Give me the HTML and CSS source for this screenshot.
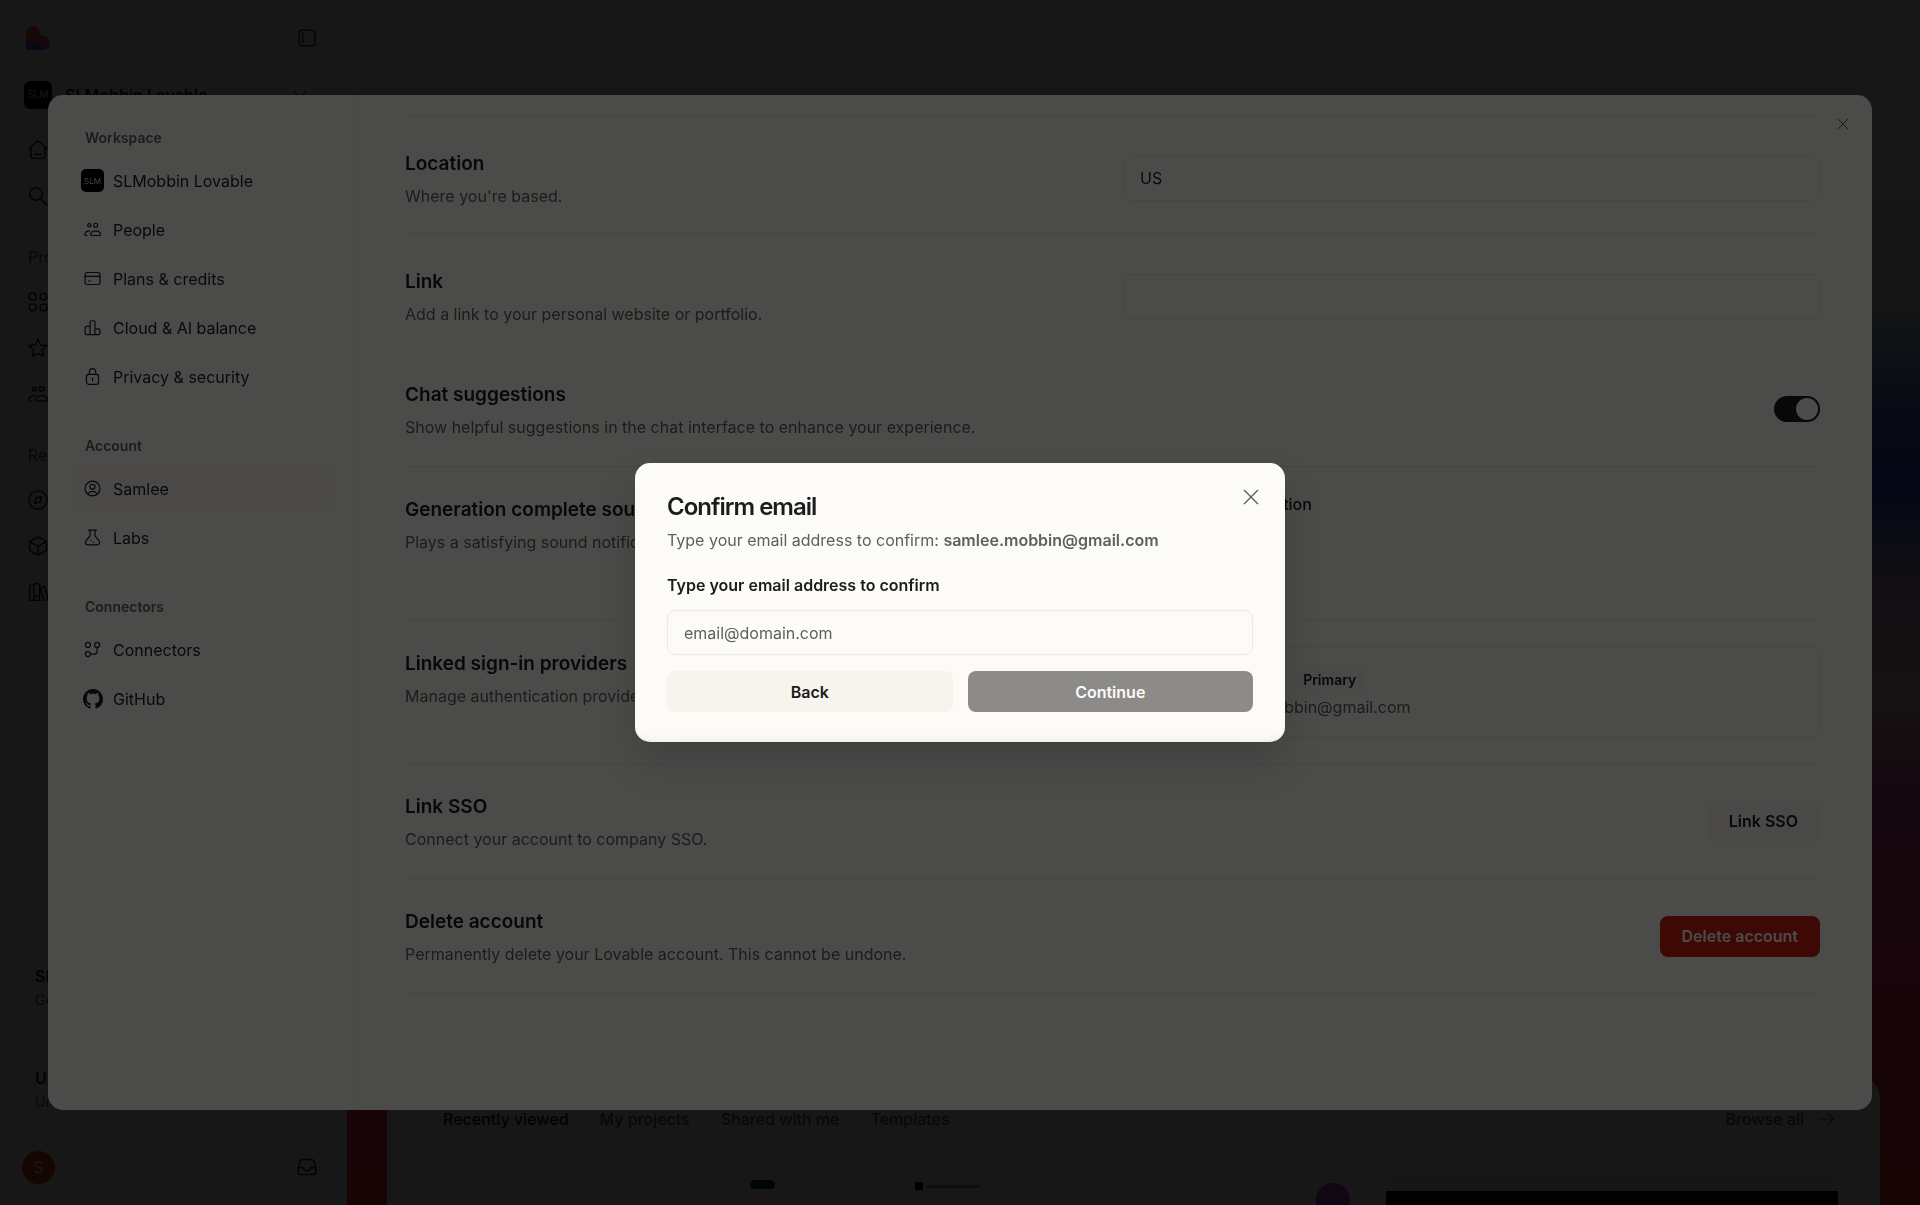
FILE: index.html
```html
<!DOCTYPE html>
<html lang="en">
<head>
    <meta charset="UTF-8">
    <meta name="viewport" content="width=device-width, initial-scale=1.0">
    <title>Lovable - Settings</title>
    <link rel="stylesheet" href="styles.css">
</head>
<body>
    <svg width="0" height="0" class="sprite" aria-hidden="true">
        <symbol id="i-people" viewBox="0 0 24 24">
            <circle cx="7.500" cy="6" r="2.300"/>
            <circle cx="16.500" cy="6" r="2.800"/>
            <path d="M11 20.500c-1.300 0-2-.9-1.700-2C10 15.800 13 14 16.500 14s6.300 1.800 6.900 4.500c.3 1.100-.5 2-1.700 2z"/>
            <path d="M8 14c-3.500 0-6 1.600-6.800 4.200-.4 1.300.3 2.300 1.600 2.300H4.500"/>
        </symbol>
        <symbol id="i-card" viewBox="0 0 24 24">
            <rect x="1.500" y="3.500" width="21" height="17" rx="3"/>
            <path d="M1.500 9h21M6.500 15.500h3"/>
        </symbol>
        <symbol id="i-chart" viewBox="0 0 24 24">
            <path d="M8.500 22V4.500a2 2 0 0 1 2-2h3a2 2 0 0 1 2 2V22M8.500 10.500h-5a2 2 0 0 0-2 2V20a2 2 0 0 0 2 2h17a2 2 0 0 0 2-2v-4a2 2 0 0 0-2-2h-5"/>
        </symbol>
        <symbol id="i-lock" viewBox="0 0 24 24">
            <rect x="3.500" y="9" width="17" height="14" rx="3"/>
            <path d="M7.500 9V5.500a4.500 4.500 0 0 1 9 0V9M12 14v4"/>
        </symbol>
        <symbol id="i-user" viewBox="0 0 24 24">
            <circle cx="12" cy="12" r="10.500"/>
            <circle cx="12" cy="9.500" r="3.500"/>
            <path d="M5.500 19.500c1.300-2.200 3.700-3.500 6.500-3.500s5.200 1.300 6.500 3.500"/>
        </symbol>
        <symbol id="i-flask" viewBox="0 0 24 24">
            <path d="M6.500 1.500h11M8.500 1.500v8.200L3 16.500C.8 19.300 2.200 22.500 5.500 22.500h13c3.300 0 4.700-3.200 2.500-6l-5.500-6.800V1.500"/>
            <path d="M9.500 15.500v.5M13.500 18.500v.5"/>
        </symbol>
        <symbol id="i-connect" viewBox="0 0 24 24">
            <circle cx="5.500" cy="5.500" r="3.500"/>
            <circle cx="18.500" cy="5.500" r="3.500"/>
            <circle cx="5.500" cy="18.500" r="3.500"/>
            <path d="M18.500 9v5.500a4 4 0 0 1-4 4H9"/>
        </symbol>
        <symbol id="i-x" viewBox="0 0 24 24">
            <path d="M2 2l20 20M22 2L2 22"/>
        </symbol>
        <symbol id="i-panel" viewBox="0 0 24 24">
            <rect x="1.500" y="1.500" width="21" height="21" rx="3"/>
            <path d="M6.500 6v12"/>
        </symbol>
        <symbol id="i-home" viewBox="0 0 24 24">
            <path d="M1 10.500l9.500-8.300a2.300 2.300 0 0 1 3 0L23 10.500M3.500 8.500V19a3 3 0 0 0 3 3h11a3 3 0 0 0 3-3V8.500M8 17h8"/>
        </symbol>
        <symbol id="i-search" viewBox="0 0 24 24">
            <circle cx="9.500" cy="9.500" r="7.500"/>
            <path d="M15 15l7.500 7.500"/>
        </symbol>
        <symbol id="i-grid" viewBox="0 0 24 24">
            <rect x="1.500" y="1.500" width="8" height="8" rx="3"/>
            <rect x="14.500" y="1.500" width="8" height="8" rx="4"/>
            <rect x="1.500" y="14.500" width="8" height="8" rx="3"/>
            <rect x="14.500" y="14.500" width="8" height="8" rx="3"/>
        </symbol>
        <symbol id="i-star" viewBox="0 0 24 24">
            <path d="M12 1.500l3.200 6.900 7.500.9-5.500 5.200 1.400 7.400L12 18.300l-6.600 3.600 1.400-7.400L1.300 9.300l7.500-.9z"/>
        </symbol>
        <symbol id="i-compass" viewBox="0 0 24 24">
            <circle cx="12" cy="12" r="11"/>
            <path d="M9.800 9.300L16 8l-1.300 6.500L8 16z"/>
        </symbol>
        <symbol id="i-box" viewBox="0 0 24 24">
            <path d="M12 1l10 5.500v11L12 23 2 17.500v-11zM2.500 7L12 12.500 21.500 7M12 12.500V23"/>
        </symbol>
        <symbol id="i-books" viewBox="0 0 24 24">
            <path d="M2 4h5v18H2zM7 4.500C7 3 8 2 9.500 2h1.800C12.800 2 14 3 14 4.500V22H7M7 17h7M15 7l5-1.500L24 21l-5 1z"/>
        </symbol>
        <symbol id="i-chevron" viewBox="0 0 24 24">
            <path d="M3 7l9 9 9-9"/>
        </symbol>
        <symbol id="i-inbox" viewBox="0 0 24 24">
            <path d="M1.500 12.500L4 5.500A3 3 0 0 1 7 3h10a3 3 0 0 1 3 2.500l2.500 7V18a3 3 0 0 1-3 3h-15a3 3 0 0 1-3-3zM1.500 12.500H7c.8 2.500 2.500 4 5 4s4.200-1.500 5-4h5.500"/>
        </symbol>
        <symbol id="i-arrow" viewBox="0 0 24 24">
            <path d="M1 12h22M15 3.500l8 8.500-8 8.500"/>
        </symbol>
    </svg>

    <!-- App behind the settings window -->
    <div class="app">
        <aside class="sidebar">
            <div class="sidebar-top">
                <svg class="logo" viewBox="0 0 24 24" aria-hidden="true">
                    <defs>
                        <linearGradient id="heart" x1="0.500" y1="0" x2="0.300" y2="1">
                            <stop offset="0.250" stop-color="#ff5a1f"/>
                            <stop offset="0.600" stop-color="#f04a8c"/>
                            <stop offset="0.900" stop-color="#5a54ff"/>
                        </linearGradient>
                    </defs>
                    <path fill="url(#heart)" d="M0 7a7 7 0 0 1 14 0v3h3a7 7 0 0 1 0 14H0z"/>
                </svg>
                <button class="icon-btn" aria-label="Collapse sidebar"><svg class="icon"><use href="#i-panel"/></svg></button>
            </div>
            <button class="workspace">
                <span class="workspace-logo">SLM</span>
                <span class="workspace-name">SLMobbin Lovable</span>
                <svg class="icon chevron"><use href="#i-chevron"/></svg>
            </button>
            <nav class="side-nav">
                <a href="#"><svg class="icon"><use href="#i-home"/></svg></a>
                <a href="#"><svg class="icon"><use href="#i-search"/></svg></a>
                <h3>Projects</h3>
                <a href="#"><svg class="icon"><use href="#i-grid"/></svg></a>
                <a href="#"><svg class="icon"><use href="#i-star"/></svg></a>
                <a href="#"><svg class="icon"><use href="#i-people"/></svg></a>
                <h3>Resources</h3>
                <a href="#"><svg class="icon"><use href="#i-compass"/></svg></a>
                <a href="#"><svg class="icon"><use href="#i-box"/></svg></a>
                <a href="#"><svg class="icon"><use href="#i-books"/></svg></a>
            </nav>
            <div class="promos">
                <div class="promo"><strong>Share Lovable</strong><span>Get 10 credits</span></div>
                <div class="promo"><strong>Upgrade</strong><span>Unlock more</span></div>
            </div>
            <div class="sidebar-user">
                <span class="avatar">S</span>
                <button class="icon-btn" aria-label="Inbox"><svg class="icon"><use href="#i-inbox"/></svg></button>
            </div>
        </aside>
        <main class="home">
            <section class="projects">
                <div class="tabs">
                    <a href="#" class="active">Recently viewed</a>
                    <a href="#">My projects</a>
                    <a href="#">Shared with me</a>
                    <a href="#">Templates</a>
                    <a href="#" class="browse">Browse all <svg class="icon"><use href="#i-arrow"/></svg></a>
                </div>
                <div class="thumbs">
                    <div class="thumb thumb-light"><span class="pill"></span></div>
                    <div class="thumb thumb-light"><span class="tag"></span><span class="tag-line"></span><span class="ball"></span></div>
                    <div class="thumb thumb-dark"></div>
                </div>
            </section>
        </main>
    </div>

    <div class="overlay"></div>

    <!-- Settings window -->
    <div class="settings">
        <nav class="settings-nav">
            <section>
                <h3>Workspace</h3>
                <a href="#"><span class="nav-icon nav-logo">SLM</span>SLMobbin Lovable</a>
                <a href="#"><span class="nav-icon"><svg class="icon"><use href="#i-people"/></svg></span>People</a>
                <a href="#"><span class="nav-icon"><svg class="icon"><use href="#i-card"/></svg></span>Plans &amp; credits</a>
                <a href="#"><span class="nav-icon"><svg class="icon"><use href="#i-chart"/></svg></span>Cloud &amp; AI balance</a>
                <a href="#"><span class="nav-icon"><svg class="icon"><use href="#i-lock"/></svg></span>Privacy &amp; security</a>
            </section>
            <section>
                <h3>Account</h3>
                <a href="#" class="active"><span class="nav-icon"><svg class="icon"><use href="#i-user"/></svg></span>Samlee</a>
                <a href="#"><span class="nav-icon"><svg class="icon"><use href="#i-flask"/></svg></span>Labs</a>
            </section>
            <section>
                <h3>Connectors</h3>
                <a href="#"><span class="nav-icon"><svg class="icon"><use href="#i-connect"/></svg></span>Connectors</a>
                <a href="#"><span class="nav-icon"><svg class="github" viewBox="0 0 16 16"><path d="M8 0C3.580 0 0 3.580 0 8c0 3.540 2.290 6.530 5.470 7.590.4.070.55-.17.55-.38 0-.19-.01-.82-.01-1.490-2.010.37-2.530-.49-2.690-.94-.09-.23-.48-.94-.82-1.130-.28-.15-.68-.52-.01-.53.63-.01 1.080.58 1.230.82.72 1.210 1.870.87 2.330.66.07-.52.28-.87.51-1.070-1.780-.2-3.640-.89-3.640-3.950 0-.87.31-1.590.82-2.150-.08-.2-.36-1.020.08-2.120 0 0 .67-.21 2.200.82.64-.18 1.320-.27 2-.27s1.360.09 2 .27c1.530-1.040 2.200-.82 2.200-.82.44 1.100.16 1.920.08 2.120.51.56.82 1.270.82 2.150 0 3.070-1.870 3.750-3.650 3.950.29.25.54.73.54 1.480 0 1.070-.01 1.930-.01 2.200 0 .21.15.46.55.38A8.010 8.010 0 0 0 16 8c0-4.420-3.580-8-8-8z"/></svg></span>GitHub</a>
            </section>
        </nav>

        <div class="settings-content">
            <div class="setting setting-field">
                <div class="setting-text">
                    <label for="location">Location</label>
                    <p>Where you're based.</p>
                </div>
                <input class="field" id="location" type="text" value="US">
            </div>
            <div class="setting setting-field no-line">
                <div class="setting-text">
                    <label for="link">Link</label>
                    <p>Add a link to your personal website or portfolio.</p>
                </div>
                <input class="field" id="link" type="text">
            </div>
            <div class="setting">
                <div class="setting-text">
                    <label for="chat">Chat suggestions</label>
                    <p>Show helpful suggestions in the chat interface to enhance your experience.</p>
                </div>
                <input class="switch" id="chat" type="checkbox" role="switch" checked>
            </div>
            <div class="setting">
                <div class="setting-text">
                    <h2>Generation complete sound</h2>
                    <p>Plays a satisfying sound notification</p>
                </div>
                <div class="radios">
                    <label><input type="radio" name="sound" checked>After first generation</label>
                </div>
            </div>
            <div class="setting">
                <div class="setting-text">
                    <h2>Linked sign-in providers</h2>
                    <p>Manage authentication providers</p>
                </div>
                <div class="provider">
                    <span class="provider-logo">G</span>
                    <div>
                        <div class="provider-name"><span>Google</span><span class="badge">Primary</span></div>
                        <p>samlee.mobbin@gmail.com</p>
                    </div>
                </div>
            </div>
            <div class="setting">
                <div class="setting-text">
                    <h2>Link SSO</h2>
                    <p>Connect your account to company SSO.</p>
                </div>
                <button class="btn btn-soft">Link SSO</button>
            </div>
            <div class="setting">
                <div class="setting-text">
                    <h2>Delete account</h2>
                    <p>Permanently delete your Lovable account. This cannot be undone.</p>
                </div>
                <button class="btn btn-danger">Delete account</button>
            </div>
        </div>
        <button class="close" aria-label="Close settings"><svg class="icon"><use href="#i-x"/></svg></button>
    </div>

    <div class="overlay"></div>

    <!-- Confirm dialog -->
    <div class="dialog-wrap">
        <form class="dialog" role="dialog" aria-labelledby="dialog-title">
            <h1 id="dialog-title">Confirm email</h1>
            <p>Type your email address to confirm: <strong>samlee.mobbin@gmail.com</strong></p>
            <label for="email">Type your email address to confirm</label>
            <input class="field" id="email" type="email" placeholder="email@domain.com">
            <div class="dialog-actions">
                <button type="button" class="btn btn-soft">Back</button>
                <button type="submit" class="btn btn-primary" disabled>Continue</button>
            </div>
            <button type="button" class="close" aria-label="Close"><svg class="icon"><use href="#i-x"/></svg></button>
        </form>
    </div>
</body>
</html>
```
FILE: styles.css
```css
:root {
    --bg: #fcfbf8;
    --text: #1c1c1c;
    --muted: #5f5f5d;
    --line: #eceae4;
    --soft: #f7f4ed;
}

* {
    margin: 0;
    padding: 0;
    box-sizing: border-box;
}

body {
    font-family: Inter, Roboto, sans-serif;
    font-size: 16px;
    line-height: 24px;
    color: var(--text);
    background: var(--bg);
    height: 100vh;
    overflow: hidden;
}

a {
    color: inherit;
    text-decoration: none;
}

button, input {
    font: inherit;
    color: inherit;
}

button {
    border: none;
    background: none;
    cursor: pointer;
}

.sprite {
    position: absolute;
}

.icon {
    width: 20px;
    height: 20px;
    fill: none;
    stroke: currentColor;
    stroke-width: 1.7;
    stroke-linecap: round;
    stroke-linejoin: round;
    display: block;
    flex: none;
}

.overlay {
    position: fixed;
    inset: 0;
    background: rgba(0, 0, 0, 0.7);
}

/* App */
.app {
    display: flex;
    height: 100vh;
}

.sidebar {
    width: 347px;
    flex: none;
    display: flex;
    flex-direction: column;
    padding: 20px 24px 15px;
}

.sidebar-top {
    display: flex;
    justify-content: space-between;
    align-items: center;
    height: 36px;
    padding: 0 7px 0 2px;
}

.sidebar-top .icon {
    width: 18px;
    height: 18px;
}

.logo {
    width: 24px;
    height: 24px;
}

.workspace {
    display: flex;
    align-items: center;
    gap: 13px;
    height: 46px;
    margin: 16px 0 9px;
    font-weight: 600;
}

.workspace-logo {
    width: 28px;
    height: 28px;
    border-radius: 6px;
    background: #000;
    color: #ddd;
    font-size: 10px;
    font-weight: 400;
    line-height: 26px;
}

.chevron {
    width: 16px;
    height: 16px;
    margin: 0 15px 0 auto;
}

.side-nav a {
    display: flex;
    align-items: center;
    height: 46px;
    padding: 0 4px;
}

.side-nav h3 {
    font-size: 16px;
    font-weight: 400;
    line-height: 24px;
    padding: 26px 4px 10px;
    color: var(--muted);
}

.promos {
    margin-top: auto;
    display: flex;
    flex-direction: column;
    gap: 12px;
}

.promo {
    display: flex;
    flex-direction: column;
    height: 90px;
    padding: 12px 11px;
    border-radius: 12px;
}

.promo strong {
    font-size: 16px;
    font-weight: 600;
}

.promo span {
    font-size: 14px;
    color: var(--muted);
}

.sidebar-user {
    display: flex;
    justify-content: space-between;
    align-items: center;
    height: 46px;
    padding-right: 6px;
}

.avatar {
    width: 33px;
    height: 33px;
    margin-left: -2px;
    border-radius: 50%;
    background: #e0481c;
    color: #fff;
    text-align: center;
    line-height: 33px;
}

.home {
    flex: 1;
    display: flex;
    flex-direction: column;
    justify-content: flex-end;
    padding: 0 40px;
    background: linear-gradient(180deg, #fcfbf8 12%, #e4eae8 25%, #4466d8 35%, #3a58dc 41%, #e0b4d0 51%, #f0c0c8 58%, #d8589c 66%, #ff3c80 78%, #ff2a4c 88%, #ff3a3a 100%);
}

.projects {
    background: var(--bg);
    border-radius: 24px 24px 0 0;
    padding: 32px 42px 0 56px;
}

.tabs {
    display: flex;
    gap: 31px;
    margin-bottom: 44px;
    color: var(--muted);
    font-weight: 500;
}

.tabs .active {
    color: var(--text);
}

.browse {
    display: flex;
    align-items: center;
    gap: 14px;
    margin-left: auto;
}

.browse .icon {
    width: 16px;
    height: 16px;
    margin-right: 4px;
}

.thumbs {
    display: grid;
    grid-template-columns: repeat(3, 1fr);
    gap: 20px;
    height: 30px;
}

.thumb {
    display: flex;
    overflow: hidden;
    border-radius: 8px 8px 0 0;
}

.thumb-light {
    background: #fff;
}

.thumb-dark {
    border-top: 16px solid #f4f4f4;
    border-radius: 0;
    background: #000;
}

.pill {
    width: 25px;
    height: 9px;
    margin: 5px 120px 0 auto;
    border-radius: 5px;
    background: #0a4a3c;
}

.tag {
    width: 8px;
    height: 8px;
    margin-top: 7px;
    background: #000;
}

.tag-line {
    width: 54px;
    height: 3px;
    margin: 10px 0 0 3px;
    background: #aaa;
}

.ball {
    width: 34px;
    height: 34px;
    margin: 8px 16px 0 auto;
    border-radius: 50%;
    background: #c840e8;
}

/* Settings window */
.settings {
    position: fixed;
    inset: 95px 48px;
    display: flex;
    background: var(--bg);
    border-radius: 15px;
    overflow: hidden;
}

.settings-nav {
    width: 307px;
    flex: none;
    display: flex;
    flex-direction: column;
    gap: 35px;
    padding: 33px 18px 33px 23px;
    border-right: 1px solid var(--line);
}

.settings-nav h3 {
    margin-bottom: 8px;
    padding-left: 14px;
    font-size: 14px;
    font-weight: 600;
    line-height: 20px;
    color: var(--muted);
}

.settings-nav a {
    display: flex;
    align-items: center;
    gap: 9px;
    height: 49px;
    padding: 0 10px;
    border-radius: 8px;
}

.settings-nav a.active {
    background: var(--soft);
}

.nav-icon {
    width: 23px;
    height: 23px;
    display: flex;
    align-items: center;
    justify-content: center;
}

.nav-icon .icon {
    width: 17px;
    height: 17px;
}

.nav-logo {
    border-radius: 5px;
    background: #000;
    color: #ddd;
    font-size: 8px;
}

.github {
    width: 20px;
    height: 20px;
    fill: currentColor;
}

.settings-content {
    flex: 1;
    margin: 20px 52px 0 50px;
    border-top: 1px solid var(--line);
}

.setting {
    display: flex;
    justify-content: space-between;
    align-items: center;
    padding: 25px 0;
    border-bottom: 1px solid var(--line);
}

.setting-field {
    padding: 30px 0 23px;
}

.setting.no-line {
    border-color: transparent;
}

.setting-text {
    align-self: flex-start;
    padding: 6px 0 2px;
}

.setting-text label, .setting-text h2 {
    display: block;
    margin-bottom: 8px;
    font-size: 19px;
    font-weight: 600;
    line-height: 24px;
}

.setting-text p, .provider p {
    color: var(--muted);
}

.field {
    height: 45px;
    padding: 0 16px;
    border: 1px solid var(--line);
    border-radius: 8px;
    background: transparent;
    outline: none;
}

.setting .field, .radios, .provider {
    width: 697px;
}

.switch {
    appearance: none;
    display: flex;
    justify-content: flex-end;
    width: 46px;
    height: 26px;
    padding: 2px;
    border-radius: 13px;
    background: var(--text);
}

.switch::before {
    content: "";
    width: 22px;
    height: 22px;
    border-radius: 50%;
    background: var(--bg);
}

.radios {
    min-height: 103px;
    font-weight: 500;
}

.radios label {
    display: flex;
    align-items: center;
    gap: 16px;
}

.radios input {
    width: 14px;
    height: 14px;
}

.provider {
    display: flex;
    align-items: center;
    gap: 22px;
    height: 92px;
    padding: 0 20px;
    border: 1px solid var(--line);
    border-radius: 8px;
}

.provider-logo {
    width: 36px;
    text-align: center;
    font-size: 24px;
}

.provider-name {
    display: flex;
    align-items: center;
    gap: 39px;
    height: 30px;
}

.badge {
    padding: 2px 8px;
    border-radius: 6px;
    background: var(--soft);
    font-size: 14px;
    font-weight: 600;
}

.btn {
    height: 41px;
    padding: 0 22px;
    border-radius: 8px;
    font-weight: 600;
}

.btn-soft {
    background: var(--soft);
}

.btn-danger {
    background: #cf2010;
    color: var(--bg);
}

.btn-primary {
    background: var(--text);
    color: var(--bg);
}

.btn-primary:disabled {
    opacity: 0.5;
    cursor: default;
}

.close {
    position: absolute;
    top: 17px;
    right: 17px;
    width: 24px;
    height: 24px;
    display: flex;
    align-items: center;
    justify-content: center;
    color: var(--muted);
}

.close .icon {
    width: 12px;
    height: 12px;
    stroke-width: 2;
}

/* Confirm dialog */
.dialog-wrap {
    position: fixed;
    inset: 0;
    display: flex;
    align-items: center;
    justify-content: center;
}

.dialog {
    position: relative;
    display: flex;
    flex-direction: column;
    width: 650px;
    padding: 30px 32px;
    border-radius: 15px;
    background: var(--bg);
    box-shadow: 0 20px 40px rgba(0, 0, 0, 0.15), inset 0 -6px 8px -4px rgba(0, 0, 0, 0.06);
}

.dialog h1 {
    margin-bottom: 7px;
    font-size: 24px;
    font-weight: 600;
    line-height: 28px;
    letter-spacing: -1px;
}

.dialog p {
    margin-bottom: 21px;
    color: var(--muted);
}

.dialog strong, .dialog label {
    font-weight: 600;
}

.dialog label {
    margin-bottom: 13px;
}

.dialog .field {
    margin-bottom: 16px;
}

.dialog .field::placeholder {
    color: var(--muted);
    opacity: 1;
}

.dialog-actions {
    display: grid;
    grid-template-columns: 1fr 1fr;
    gap: 15px;
}

.dialog .close {
    top: 22px;
    right: 22px;
}

.dialog .close .icon {
    width: 16px;
    height: 16px;
}
```
